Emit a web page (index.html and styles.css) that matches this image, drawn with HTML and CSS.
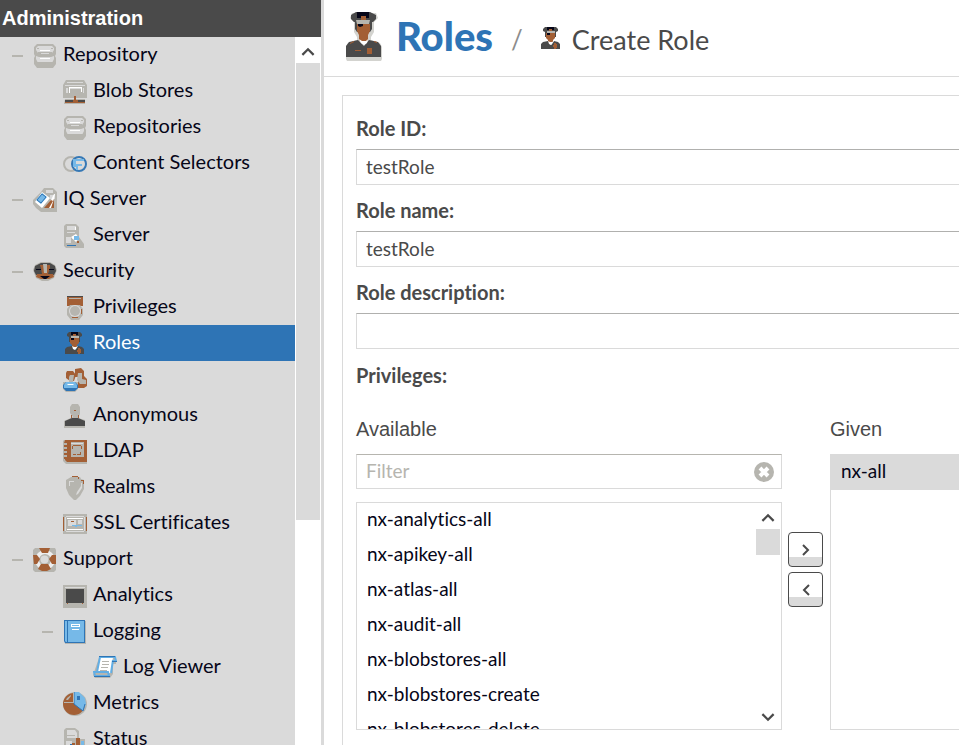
FILE: index.html
```html
<!DOCTYPE html>
<html lang="en">
<head>
<meta charset="utf-8">
<title>Create Role</title>
<link rel="stylesheet" href="styles.css">
</head>
<body>
<svg class="sprite" aria-hidden="true">
  <symbol id="database" viewBox="0 0 24 24">
    <path class="g" d="M4 0h16l3 3v7l-1 2 1 2v6l-3 4H4l-3-4v-6l1-2-1-2V3z"/>
    <path class="bg" d="M5 2h14l2 2v2l-2 3h-3v1H8V9H5L3 6V4zM3 12l3 1h12l3-1v3l-2 4H5l-2-4z"/>
    <path class="g" d="M4 4h2v1H4zM18 4h2v1h-2zM5 8h14v1H5zM4 18h16v1H4z"/>
    <path class="w" d="M7 6h10v1H7zM7 14h10v1H7z"/>
  </symbol>
  <symbol id="officer" viewBox="0 0 24 24">
    <path class="d" d="M6 0h11l2 2v2l-2 1v5H6V5L4 4V2z"/>
    <path class="br" d="M7 6h9v5l-2 2v3H9v-3l-2-2z"/>
    <path class="k" d="M8 0h7v3H8zM8 6h3v2H8z"/>
    <path class="br" d="M10 2h3v2h-3z"/>
    <path class="g" d="M8 4h8v2H8z"/>
    <path class="d" d="M2 17l2-2 5-1 3 4 3-4 4 1 2 2v5H2z"/>
    <path class="w" d="M9 14l2 1h2l2-1-2 3-1 1-2-1z"/>
    <path class="br" d="M15 16h2v1h1v4h-1v1h-2v-2h-1v-2h1z"/>
  </symbol>
</svg>
<div class="app">
  <aside class="sidebar">
    <h2 class="sidebar-title">Administration</h2>
    <div class="tree-wrap">
      <nav class="tree" aria-label="Administration">
        <a href="#" class="node l1"><span class="dash"></span><svg class="icon"><use href="#database"/></svg>Repository</a>
        <a href="#" class="node l2"><svg class="icon" viewBox="0 0 24 24"><path class="g" d="M3 0h18l3 5v13H0V5z"/><path class="bg" d="M4 2h16v1H4zM2 5h20v1H2zM3 8h2v5H3zM6 8h13v1H6zM20 8h1v5h-1z"/><path class="w" d="M6 7h13v5h-1V8H7v5H6z"/><path class="g" d="M2 19h20v5H1z"/><path class="br" d="M11 16h2v4h9v3H2v-3h9z"/><path class="d" d="M2 20h8v2H2zM15 20h7v2h-7z"/></svg>Blob Stores</a>
        <a href="#" class="node l2"><svg class="icon"><use href="#database"/></svg>Repositories</a>
        <a href="#" class="node l2"><svg class="icon" viewBox="0 0 24 24"><circle class="gs" cx="8" cy="12" r="7"/><circle cx="16" cy="12" r="7" fill="#dadada" stroke="#3678b5" stroke-width="2"/><path class="lb" d="M10 7h11v2h-8v3h6v2h-4v4h-2v-3h-3z"/></svg>Content Selectors</a>
        <a href="#" class="node l1"><span class="dash"></span><svg class="icon" viewBox="0 0 24 24"><path class="g" d="M11 0h9l4 4v20H8l-5-4-3-4v-4L8 4z"/><path class="bg" d="M13 2h7v3h-7zM17 7h5v4h-5z"/><path class="w" d="M9 4l8 6-8 10-7-6z"/><path class="lb" d="M9 5l5 4-6 7-5-4z"/><path d="M9 6l4 3-5 6-4-3z" fill="none" stroke="#2e74b5"/><path class="w" d="M14 20l7-14h1l-3 14z"/><path class="br" d="M18 12l2 1-4 7h-5zM21 11v9h-3z"/></svg>IQ Server</a>
        <a href="#" class="node l2"><svg class="icon" viewBox="0 0 24 24"><path class="g" d="M3 0h10l3 3v10l5 7v4H3l-2-2V2z"/><path class="bg" d="M4 2h9v4H4zM4 8h8v1H4zM3 13h5v6H3zM9 13h2v2H9z"/><path class="w" d="M12 3h1v3h-1zM8 13l5-3 3 4-3 4z"/><path class="lb" d="M11 12h5v4h-5z"/><path class="b" d="M4 21h9v1H4z"/><path class="br" d="M14 17h2v2h-2z"/></svg>Server</a>
        <a href="#" class="node l1"><span class="dash"></span><svg class="icon" viewBox="0 0 24 24"><path class="g" d="M8 2h9l5 3 2 5-3 8-6 3H9l-6-3-3-8 2-5z"/><path class="d" d="M8 3h9l5 3 1 5-2 4H3l-2-4 1-5z"/><path class="br" d="M7 5h10v3l-2 6h5l1 3-5 2H8l-5-2 1-3h5L8 8z"/><path class="g" d="M10 4h4v9h-3z"/><path class="k" d="M3 9h5v1H3zM16 9h5v1h-5zM7 16h10l-4 3h-2z"/></svg>Security</a>
        <a href="#" class="node l2"><svg class="icon" viewBox="0 0 24 24"><path class="br" d="M4 0h16v10H4z"/><path class="d" d="M4 0h16v1H4z"/><path class="g" d="M6 2h12v1H6zM7 9h10l3 4v6l-4 5H8l-4-5v-6z"/><circle class="bg" cx="12" cy="15" r="6"/><circle class="g" cx="12" cy="15" r="5"/><path class="br" d="M9 21h6v1H9zM18 13h1v5h-1z"/></svg>Privileges</a>
        <a href="#" class="node l2 selected" aria-current="page"><svg class="icon"><use href="#officer"/></svg>Roles</a>
        <a href="#" class="node l2"><svg class="icon" viewBox="0 0 24 24"><path class="br" d="M12 1l6-1 3 3v5l3 3v7l-3 2h-6V9h-3z"/><path class="g" d="M15 5h4v6l4 1v4h-6l-3-4z"/><path class="br" d="M4 3h6l3 4-2 6H7l-4-3V5z"/><path class="g" d="M7 7h4l-1 7H6V9zM0 14h15v7l-3 3H3l-3-3z"/><path class="b" d="M3 14h9l3 3v3l-3 3H3l-3-3v-3z"/><path class="lb" d="M3 14h9l2 3v3H1v-3z"/><path class="w" d="M4 16h7l-1 1H5z"/></svg>Users</a>
        <a href="#" class="node l2"><svg class="icon" viewBox="0 0 24 24"><path class="g" d="M9 0h6l2 3v7l-2 4 7 2v8H1v-7l9-4-3-4V3z"/><path class="d" d="M2 17l7-3h6l7 3v5H2z"/><path class="br" d="M11 6h2v1h-2zM8 11h1v3H8zM15 11h1v3h-1z"/></svg>Anonymous</a>
        <a href="#" class="node l2"><svg class="icon" viewBox="0 0 24 24"><path class="g" d="M1 0h23v24H3L0 21V1z"/><path class="br" d="M2 0h22v22H4l-2-2v-1H1v-2h3v-2H1v-2h3v-2H1V9h3V7H1V5h3V3H1z"/><path class="g" d="M8 2h13v15H8z"/><path class="bg" d="M8 3h12v1H8z"/><path class="br" d="M10 5h8v1h-8zM9 6h1v3H9zM18 6h1v3h-1zM10 14h3v1h-3zM14 14h4v1h-4zM17 12h1v2h-1z"/></svg>LDAP</a>
        <a href="#" class="node l2"><svg class="icon" viewBox="0 0 24 24"><path class="g" d="M8 1h9l1 2 3 1v9l-4 7-4 4h-2l-5-5-3-7V4z"/><path class="br" d="M9 0h6v1h1v2h-1V1H9zM18 4h3v4h-1V5h-2z"/><path class="bg" d="M18 7h1v5l-4 6-2 1 1-3 4-6zM6 5h5v1H7v4H6z"/></svg>Realms</a>
        <a href="#" class="node l2"><svg class="icon" viewBox="0 0 24 24"><path class="g" d="M0 2h24v20H0z"/><path class="br" d="M0 5h1v14H0zM23 5h1v14h-1z"/><path class="bg" d="M3 4h18v1H3zM3 19h18v1H3zM2 5h1v14H2zM21 5h1v14h-1z"/><path class="w" d="M4 6h16v1H4zM4 17h16v1H4z"/><path class="bg" d="M5 8h8v6H5zM15 8h4v4h-4z"/><path class="br" d="M8 9h3v1H8z"/><path class="lb" d="M9 13h10v1h-5v1h-2v-1H9z"/></svg>SSL Certificates</a>
        <a href="#" class="node l1"><span class="dash"></span><svg class="icon" viewBox="0 0 24 24"><path class="g" d="M2 0h20l1 2v20l-2 2H2l-2-2V2z"/><circle cx="12" cy="12" r="8" fill="none" stroke="#eee" stroke-width="4"/><path class="br" d="M6 0h11l-2 5H9zM0 7h4l3 4-3 5H1zM23 7h-4l-3 4 3 5h4zM8 16h7l3 5-4 2h-5l-4-2z"/><circle class="bg" cx="11.500" cy="11.500" r="4"/></svg>Support</a>
        <a href="#" class="node l2"><svg class="icon" viewBox="0 0 24 24"><path class="g" d="M0 1h24v23H0z"/><path class="bg" d="M2 3h20v1H2z"/><path class="d" d="M3 5h18v14H3z"/><path class="br" d="M4 19h1v1H4zM19 19h1v1h-1z"/></svg>Analytics</a>
        <a href="#" class="node l2 open"><span class="dash"></span><svg class="icon" viewBox="0 0 24 24"><path class="g" d="M2 1h21v23H2z"/><path class="b" d="M1 0h21v23H2l-1-2z"/><path class="lb" d="M2 1h2v21H3l-1-1zM5 1h16v21H5z"/><path class="w" d="M8 4h9v3H8zM9 9h7v1H9z"/><path class="lb" d="M9 5h7v1H9z"/></svg>Logging</a>
        <a href="#" class="node l3"><svg class="icon" viewBox="0 0 24 24"><path class="g" d="M6 2h17v6h-3v10l-3 4H2l-2-3z"/><path class="w" d="M7 1h13l-2 16H4z"/><path d="M7 1h15l1 4h-3M7 1L4 16M20 4l-2 13M1 16h14l1 4H2z" fill="#fff" fill-opacity=".01" stroke="#62aee4" stroke-width="2"/><path class="b" d="M6 0h16v1H6zM1 20h16v1H1zM19 5h5v1h-5z"/><path class="g" d="M9 5h7v1H9zM9 8h7v1H9zM8 11h7v1H8zM7 14h7v1H7z"/></svg>Log Viewer</a>
        <a href="#" class="node l2"><svg class="icon" viewBox="0 0 24 24"><circle class="g" cx="12" cy="12" r="12"/><circle class="br" cx="11" cy="12" r="11"/><path class="lb" d="M11 0h5l6 6 1 6-3 7-9-7z"/><path d="M11 0v12l9 7 2-7" fill="none" stroke="#2e74b5"/><path class="b" d="M14 4h3v4h-3z"/><path class="g" d="M1 11h10V0h-1v10H1zM4 6l4-3v1L5 8H3z"/></svg>Metrics</a>
        <a href="#" class="node l2"><svg class="icon" viewBox="0 0 24 24"><path class="g" d="M3 0h9l4 3v8h6v13H3l-2-2V2z"/><path class="bg" d="M4 2h8l2 3v5H4zM3 13h6v6H3z"/><path class="g" d="M4 7h8v1H4zM4 10h6v1H4z"/><path class="br" d="M13 10h4v14h-4zM9 15h3v9H9z"/><path class="lb" d="M18 13h3v11h-3z"/><path class="b" d="M7 16h2v8H7z"/></svg>Status</a>
      </nav>
      <div class="scrollbar" aria-hidden="true">
        <span class="scroll-btn"><svg class="chev" viewBox="0 0 12 8"><path d="M1 7l5-5 5 5"/></svg></span>
        <span class="thumb"></span>
      </div>
    </div>
  </aside>
  <main class="main">
    <header class="crumbs">
      <svg class="crumb-big" viewBox="0 0 36 49"><path class="g" d="M6 1h24l2 5-4 4v10l-3 5v3l9 3 2 4v12l-1 2H1l-1-2V35l2-4 9-3v-3l-3-5V10L4 6z" opacity=".6"/><path class="d" d="M10 0h14l6 3v4l-3 3H8L5 7V3zM9 10h17v7l-2 3H11l-2-3z"/><path class="br" d="M11 12h13v7l-2 4v5l-4 3-5-3v-5l-2-4z"/><path class="k" d="M11 0h12v6H11z"/><path class="br" d="M15 4h5v5h-5z"/><path class="g" d="M10 8h14l-1 4H11z"/><path class="k" d="M12 12h5v2l-3 1-2-1z"/><path class="d" d="M0 34l3-4 9-2 6 6 5-6 9 2 3 4v11H0z"/><path class="w" d="M13 27l3 2h4l2-2-1 4-3 2-3-2z"/><path class="br" d="M9 38h6v1H9zM21 36h5v6h-5zM4 31l4-2v1l-4 2zM28 29l3 1v1l-3-1z"/></svg>
      <h1 class="crumb-root">Roles</h1>
      <span class="slash">/</span>
      <svg class="icon crumb-small"><use href="#officer"/></svg>
      <span class="crumb-leaf">Create Role</span>
    </header>
    <form class="panel">
      <div class="field"><label for="rid">Role ID:</label><input id="rid" type="text" value="testRole"></div>
      <div class="field"><label for="rname">Role name:</label><input id="rname" type="text" value="testRole"></div>
      <div class="field"><label for="rdesc">Role description:</label><input id="rdesc" type="text"></div>
      <div class="group-label">Privileges:</div>
      <div class="picker">
        <section class="col-available">
          <label class="col-title" for="filter">Available</label>
          <div class="filter"><input id="filter" type="text" placeholder="Filter"><button type="button" class="clear" aria-label="Clear"><svg viewBox="0 0 20 20"><circle class="g" cx="10" cy="10" r="10"/><path d="M6 6l8 8m0-8l-8 8" stroke="#fff" stroke-width="4"/></svg></button></div>
          <div class="list">
            <ul>
              <li>nx-analytics-all</li><li>nx-apikey-all</li><li>nx-atlas-all</li><li>nx-audit-all</li><li>nx-blobstores-all</li><li>nx-blobstores-create</li><li>nx-blobstores-delete</li>
            </ul>
            <div class="list-scroll" aria-hidden="true">
              <span class="scroll-btn"><svg class="chev" viewBox="0 0 12 8"><path d="M1 7l5-5 5 5"/></svg></span>
              <span class="list-thumb"></span>
              <span class="scroll-btn end"><svg class="chev" viewBox="0 0 12 8"><path d="M1 1l5 5 5-5"/></svg></span>
            </div>
          </div>
        </section>
        <div class="moves">
          <button type="button" aria-label="Add"><svg viewBox="0 0 8 12"><path d="M1 1l5 5-5 5"/></svg></button>
          <button type="button" aria-label="Remove"><svg viewBox="0 0 8 12"><path d="M7 1L2 6l5 5"/></svg></button>
        </div>
        <section class="col-given">
          <div class="col-title">Given</div>
          <ul class="given"><li>nx-all</li></ul>
        </section>
      </div>
    </form>
  </main>
</div>
</body>
</html>
```
FILE: styles.css
```css
* { box-sizing: border-box; }
body { margin: 0; background: #fff; color: #4a4a4a; font: 20px/26px Lato, "Liberation Sans", sans-serif; font-variant-ligatures: none; }
ul, h1, h2 { margin: 0; padding: 0; list-style: none; }
.sprite { display: none; }
.g { fill: #b6b5af; }
.bg { fill: #dadada; }
.w { fill: #fff; }
.d { fill: #4a4a4a; }
.k { fill: #060618; }
.br { fill: #a35f35; }
.b { fill: #2e74b5; }
.lb { fill: #76b9e8; }
.gs { fill: none; stroke: #b6b5af; stroke-width: 2; }

.app { display: flex; height: 100vh; overflow: hidden; }
.sidebar { display: flex; flex-direction: column; flex: 0 0 324px; border-right: 3px solid #dadada; }
.sidebar-title { background: #4a4a4a; color: #fff; padding: 0 2px; font: bold 20px/37px "Liberation Sans", sans-serif; }
.tree-wrap { display: flex; flex: 1; min-height: 0; }
.tree { flex: 1; overflow: hidden; background: #dadada; }
.node { display: flex; align-items: center; height: 36px; padding-bottom: 4px; color: #060618; text-decoration: none; white-space: nowrap; }
.node .icon { margin: 6px 6px 0 0; }
.icon { width: 24px; height: 24px; flex: none; }
.dash { width: 11px; height: 2px; margin: 6px 10px 0 12px; background: #b6b5af; }
.l2 { padding-left: 63px; }
.l2.open { padding-left: 30px; }
.l3 { padding-left: 93px; }
.selected { background: #2e74b5; color: #fff; }
.scrollbar { width: 26px; padding: 0 1px; display: flex; flex-direction: column; }
.scroll-btn { display: flex; align-items: center; justify-content: center; height: 26px; padding-top: 2px; flex: none; }
.chev { width: 14px; height: 9px; fill: none; stroke: #4a4a4a; stroke-width: 2; }
.thumb { flex: 0 0 65%; max-height: 457px; background: #dadada; }

.main { flex: 1; min-width: 0; display: flex; flex-direction: column; }
.crumbs { display: flex; align-items: center; height: 77px; padding: 0 22px; border-bottom: 1px solid #dadada; white-space: nowrap; }
.crumb-big { width: 36px; height: 49px; flex: none; margin: 0 14px 3px 0; }
.crumb-root { margin-bottom: 4px; color: #2e74b5; font-size: 40px; line-height: 46px; font-weight: 900; }
.slash { margin: 2px 16px 0 18px; font-size: 26px; color: #8c8c8c; }
.crumb-small { margin: 2px 9px 0 0; }
.crumb-leaf { margin-top: 4px; font-size: 27px; }

.panel { flex: 1; margin: 18px 0 0 18px; padding: 19px 0 0 13px; border: 1px solid #dadada; border-width: 1px 0 0 1px; }
.field { display: flex; flex-direction: column; gap: 8px; margin-bottom: 12px; }
.field label, .group-label { font-weight: bold; }
.group-label { line-height: 28px; }
input { width: 100%; height: 36px; padding: 0 9px 2px; border: 1px solid #dadada; border-top-color: #b0b0ae; border-right: 0; background: #fff; color: #4a4a4a; font: inherit; font-size: 19px; outline: 0; }
input::placeholder { color: #b6b5af; opacity: 1; }
.picker { display: flex; margin-top: 27px; }
.col-available { width: 426px; flex: none; }
.col-title { display: block; margin-bottom: 12px; font-family: "Liberation Sans", sans-serif; }
.filter { display: flex; align-items: center; height: 35px; margin-bottom: 13px; border: 1px solid #dadada; border-top-color: #b6b5af; }
.filter input { flex: 1; height: 33px; border: 0; }
.clear { width: 20px; height: 20px; margin-right: 7px; padding: 0; border: 0; background: none; }
.clear svg { display: block; }
.list { display: flex; height: 228px; overflow: hidden; border: 1px solid #dadada; color: #060618; font-size: 19px; }
.list ul { flex: 1; padding-left: 10px; line-height: 32px; }
.list li { padding-bottom: 3px; }
.list-scroll { display: flex; flex-direction: column; width: 26px; padding: 0 1px; }
.list-thumb { height: 26px; background: #dadada; }
.end { margin-top: auto; }
.moves { display: flex; flex-direction: column; gap: 5px; margin: 116px 7px 0 6px; }
.moves button { display: flex; align-items: center; justify-content: center; width: 35px; height: 35px; padding: 0; border: 1px solid #4a4a4a; border-radius: 4px; background: linear-gradient(#fff 24px, #dadada 24px); }
.moves svg { width: 8px; height: 12px; fill: none; stroke: #4a4a4a; stroke-width: 2; }
.col-given { flex: 1; min-width: 0; }
.given { height: 276px; border: 1px solid #dadada; border-width: 0 0 1px 1px; color: #060618; font-size: 19px; line-height: 33px; }
.given li { padding: 0 0 3px 10px; background: #dadada; }
```
